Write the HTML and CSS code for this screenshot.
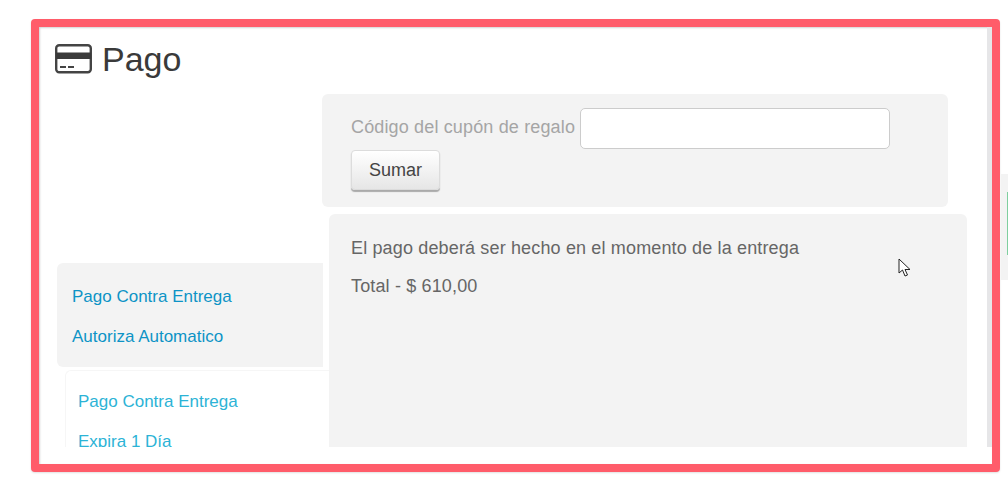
FILE: index.html
```html
<!DOCTYPE html>
<html lang="es">
<head>
<meta charset="utf-8">
<title>Pago</title>
<link rel="stylesheet" href="styles.css">
</head>
<body>
<div class="frame">
  <div class="viewport">
    <h1 class="title">
      <svg class="card-icon" viewBox="0 0 37 30" width="37" height="30" aria-hidden="true">
        <rect x="1.2" y="1.2" width="34.6" height="27" rx="3" fill="#fff" stroke="#444" stroke-width="2.4"/>
        <rect x="1" y="8.5" width="35" height="6.5" fill="#3a3a3a"/>
        <rect x="5" y="22" width="6" height="2" fill="#444"/>
        <rect x="13" y="22" width="6" height="2" fill="#444"/>
      </svg>
      <span class="title-text">Pago</span>
    </h1>
    <div class="columns">
      <div class="side">
        <ul class="tabs">
          <li><a href="#">Pago Contra Entrega</a></li>
          <li><a href="#">Autoriza Automatico</a></li>
        </ul>
        <ul class="subtabs">
          <li><a href="#">Pago Contra Entrega</a></li>
          <li><a href="#">Expira 1 Día</a></li>
        </ul>
      </div>
      <div class="main">
        <form class="coupon">
          <label class="coupon-label" for="c">Código del cupón de regalo</label>
          <input class="coupon-input" id="c" type="text">
          <button class="btn" type="button">Sumar</button>
        </form>
        <div class="panel">
          <p class="line">El pago deberá ser hecho en el momento de la entrega</p>
          <p class="line">Total - $ 610,00</p>
        </div>
      </div>
    </div>
  </div>
</div>
<div class="edge"><div class="edge-mark"></div></div>
<svg class="cursor" width="14" height="20" viewBox="0 0 14 20" aria-hidden="true">
  <path d="M1 1 L1 15 L4.5 12 L7 18 L9.5 17 L7 11.5 L12 11.5 Z" fill="#fff" stroke="#222" stroke-width="1"/>
</svg>
</body>
</html>
```
FILE: styles.css
```css
* { box-sizing: border-box; }
html, body { margin: 0; padding: 0; }
body {
  width: 1008px;
  height: 499px;
  overflow: hidden;
  background: #fff;
  font-family: "Liberation Sans", Arial, sans-serif;
  position: relative;
}
.frame {
  margin: 19px 0 0 31px;
  width: 969px;
  height: 453px;
  border: 8px solid #ff5c6a;
  border-radius: 4px;
  box-shadow: inset 1px 1px 2px rgba(0,0,0,.18), 0 1px 2px rgba(0,0,0,.12);
  background: #fff;
}
.viewport {
  height: 420px;
  overflow: hidden;
  padding: 0 0 0 16px;
  border-right: 5px solid #e6e6e8;
}
.title {
  margin: 0;
  height: 67px;
  padding-top: 17px;
  display: flex;
  align-items: flex-start;
  gap: 10px;
  font-size: 34px;
  font-weight: 400;
  line-height: 32px;
  color: #3a3a3a;
}
.title-text { margin-top: -1px; }
.card-icon { display: block; }
.columns { display: flex; align-items: flex-start; }
.side {
  width: 274px;
  flex: none;
  padding: 169px 0 0 2px;
}
.tabs, .subtabs { list-style: none; margin: 0; padding: 0; font-size: 17px; }
.tabs {
  width: 266px;
  height: 104px;
  padding: 14px 0 0 15px;
  background: #f3f3f3;
  border-radius: 6px 0 0 6px;
}
.subtabs {
  margin: 3px 0 0 8px;
  height: 120px;
  padding: 11px 0 0 12px;
  background: #fff;
  border: 1px solid #f6f6f6;
  border-width: 1px 0 0 1px;
  border-radius: 6px 0 0 0;
}
.tabs li, .subtabs li { height: 40px; line-height: 40px; }
.tabs a { color: #0d93c6; text-decoration: none; }
.subtabs a { color: #2cb3d6; text-decoration: none; }
.main { width: 638px; flex: none; }
.coupon {
  margin-left: -7px;
  width: 626px;
  height: 113px;
  padding: 14px 0 0 29px;
  background: #f3f3f3;
  border-radius: 6px;
  display: flex;
  flex-wrap: wrap;
  align-items: center;
  align-content: flex-start;
  column-gap: 5px;
}
.coupon-label { font-size: 18px; letter-spacing: .15px; color: #a5a5a5; line-height: 36px; margin-top: -4px; }
.coupon-input {
  width: 310px;
  height: 41px;
  background: #fff;
  border: 1px solid #ccc;
  border-radius: 5px;
}
.btn {
  flex: none;
  width: 89px;
  height: 40px;
  margin-top: 1px;
  margin-right: 200px;
  font: 18px "Liberation Sans", Arial, sans-serif;
  color: #444;
  background: linear-gradient(#fff, #e6e6e6);
  border: 1px solid #dcdcdc;
  border-radius: 4px;
  box-shadow: 0 2px 1px #aaa;
}
.panel {
  margin-top: 7px;
  height: 300px;
  padding: 23px 0 0 22px;
  background: #f3f3f3;
  border-radius: 6px 6px 0 0;
  font-size: 18px;
  letter-spacing: .15px;
  color: #666;
}
.line { margin: 0 0 15px; line-height: 23px; font-weight: 400; }
.edge {
  position: absolute;
  left: 1001px;
  top: 174px;
  width: 7px;
  height: 106px;
  padding: 18px 0 0 6px;
  background: #f3f3f3;
}
.edge-mark { width: 1px; height: 63px; background: #7fcf9f; }
.cursor { position: absolute; left: 898px; top: 258px; }
```
